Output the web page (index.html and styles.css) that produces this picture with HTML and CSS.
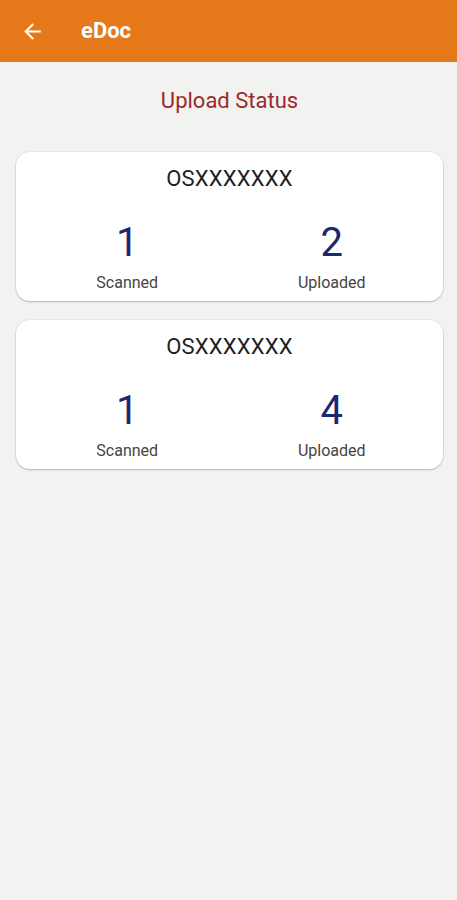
FILE: index.html
```html
<!DOCTYPE html>
<html lang="en">
<head>
<meta charset="utf-8">
<title>eDoc</title>
<link rel="stylesheet" href="styles.css">
</head>
<body>
<header class="appbar">
  <button class="back" aria-label="Back">
    <svg width="25" height="25" viewBox="0 0 24 24"><path d="M20 11H7.83l5.59-5.59L12 4l-8 8 8 8 1.41-1.41L7.83 13H20v-2z" fill="#fff"/></svg>
  </button>
  <h1 class="title">eDoc</h1>
</header>
<main class="content">
  <h2 class="page-title">Upload Status</h2>
  <section class="card">
    <div class="card-id">OSXXXXXXX</div>
    <div class="stats">
      <div class="stat"><div class="num">1</div><div class="label">Scanned</div></div>
      <div class="stat"><div class="num">2</div><div class="label">Uploaded</div></div>
    </div>
  </section>
  <section class="card">
    <div class="card-id">OSXXXXXXX</div>
    <div class="stats">
      <div class="stat"><div class="num">1</div><div class="label">Scanned</div></div>
      <div class="stat"><div class="num">4</div><div class="label">Uploaded</div></div>
    </div>
  </section>
</main>
</body>
</html>
```
FILE: styles.css
```css
* { box-sizing: border-box; }
html, body { margin: 0; padding: 0; }
body {
  background: #f2f2f0;
  font-family: Roboto, "Liberation Sans", sans-serif;
  width: 457px;
  min-height: 900px;
}
.appbar {
  height: 62px;
  background: #e57818;
  display: flex;
  align-items: center;
  padding-left: 20px;
}
.back {
  background: none;
  border: 0;
  padding: 0;
  width: 25px;
  height: 25px;
  display: flex;
  margin-top: 0;
}
.title {
  margin: 0 0 0 36px;
  color: #fff;
  font-size: 22px;
  font-weight: 700;
  line-height: 24px;
}
.content {
  padding: 0 14px 0 16px;
  display: flex;
  flex-direction: column;
}
.page-title {
  margin: 27px 0 39px;
  text-align: center;
  font-weight: 400;
  font-size: 22px;
  line-height: 24px;
  color: #9b2a2a;
}
.card {
  background: #fff;
  border-radius: 14px;
  box-shadow: 0 1px 2px rgba(0,0,0,0.22), 0 0 0 1px rgba(0,0,0,0.04);
  padding: 15px 9px 8px;
  margin-bottom: 19px;
  width: 427px;
}
.card-id {
  text-align: center;
  font-size: 22px;
  line-height: 24px;
  color: #1e1e1e;
  letter-spacing: 0.2px;
}
.stats {
  display: grid;
  grid-template-columns: 1fr 1fr;
  margin-top: 28px;
}
.stat {
  display: flex;
  flex-direction: column;
  align-items: center;
}
.num {
  font-size: 40px;
  line-height: 48px;
  color: #1b2770;
}
.label {
  margin-top: 6px;
  font-size: 16px;
  line-height: 20px;
  color: #444;
}
```
